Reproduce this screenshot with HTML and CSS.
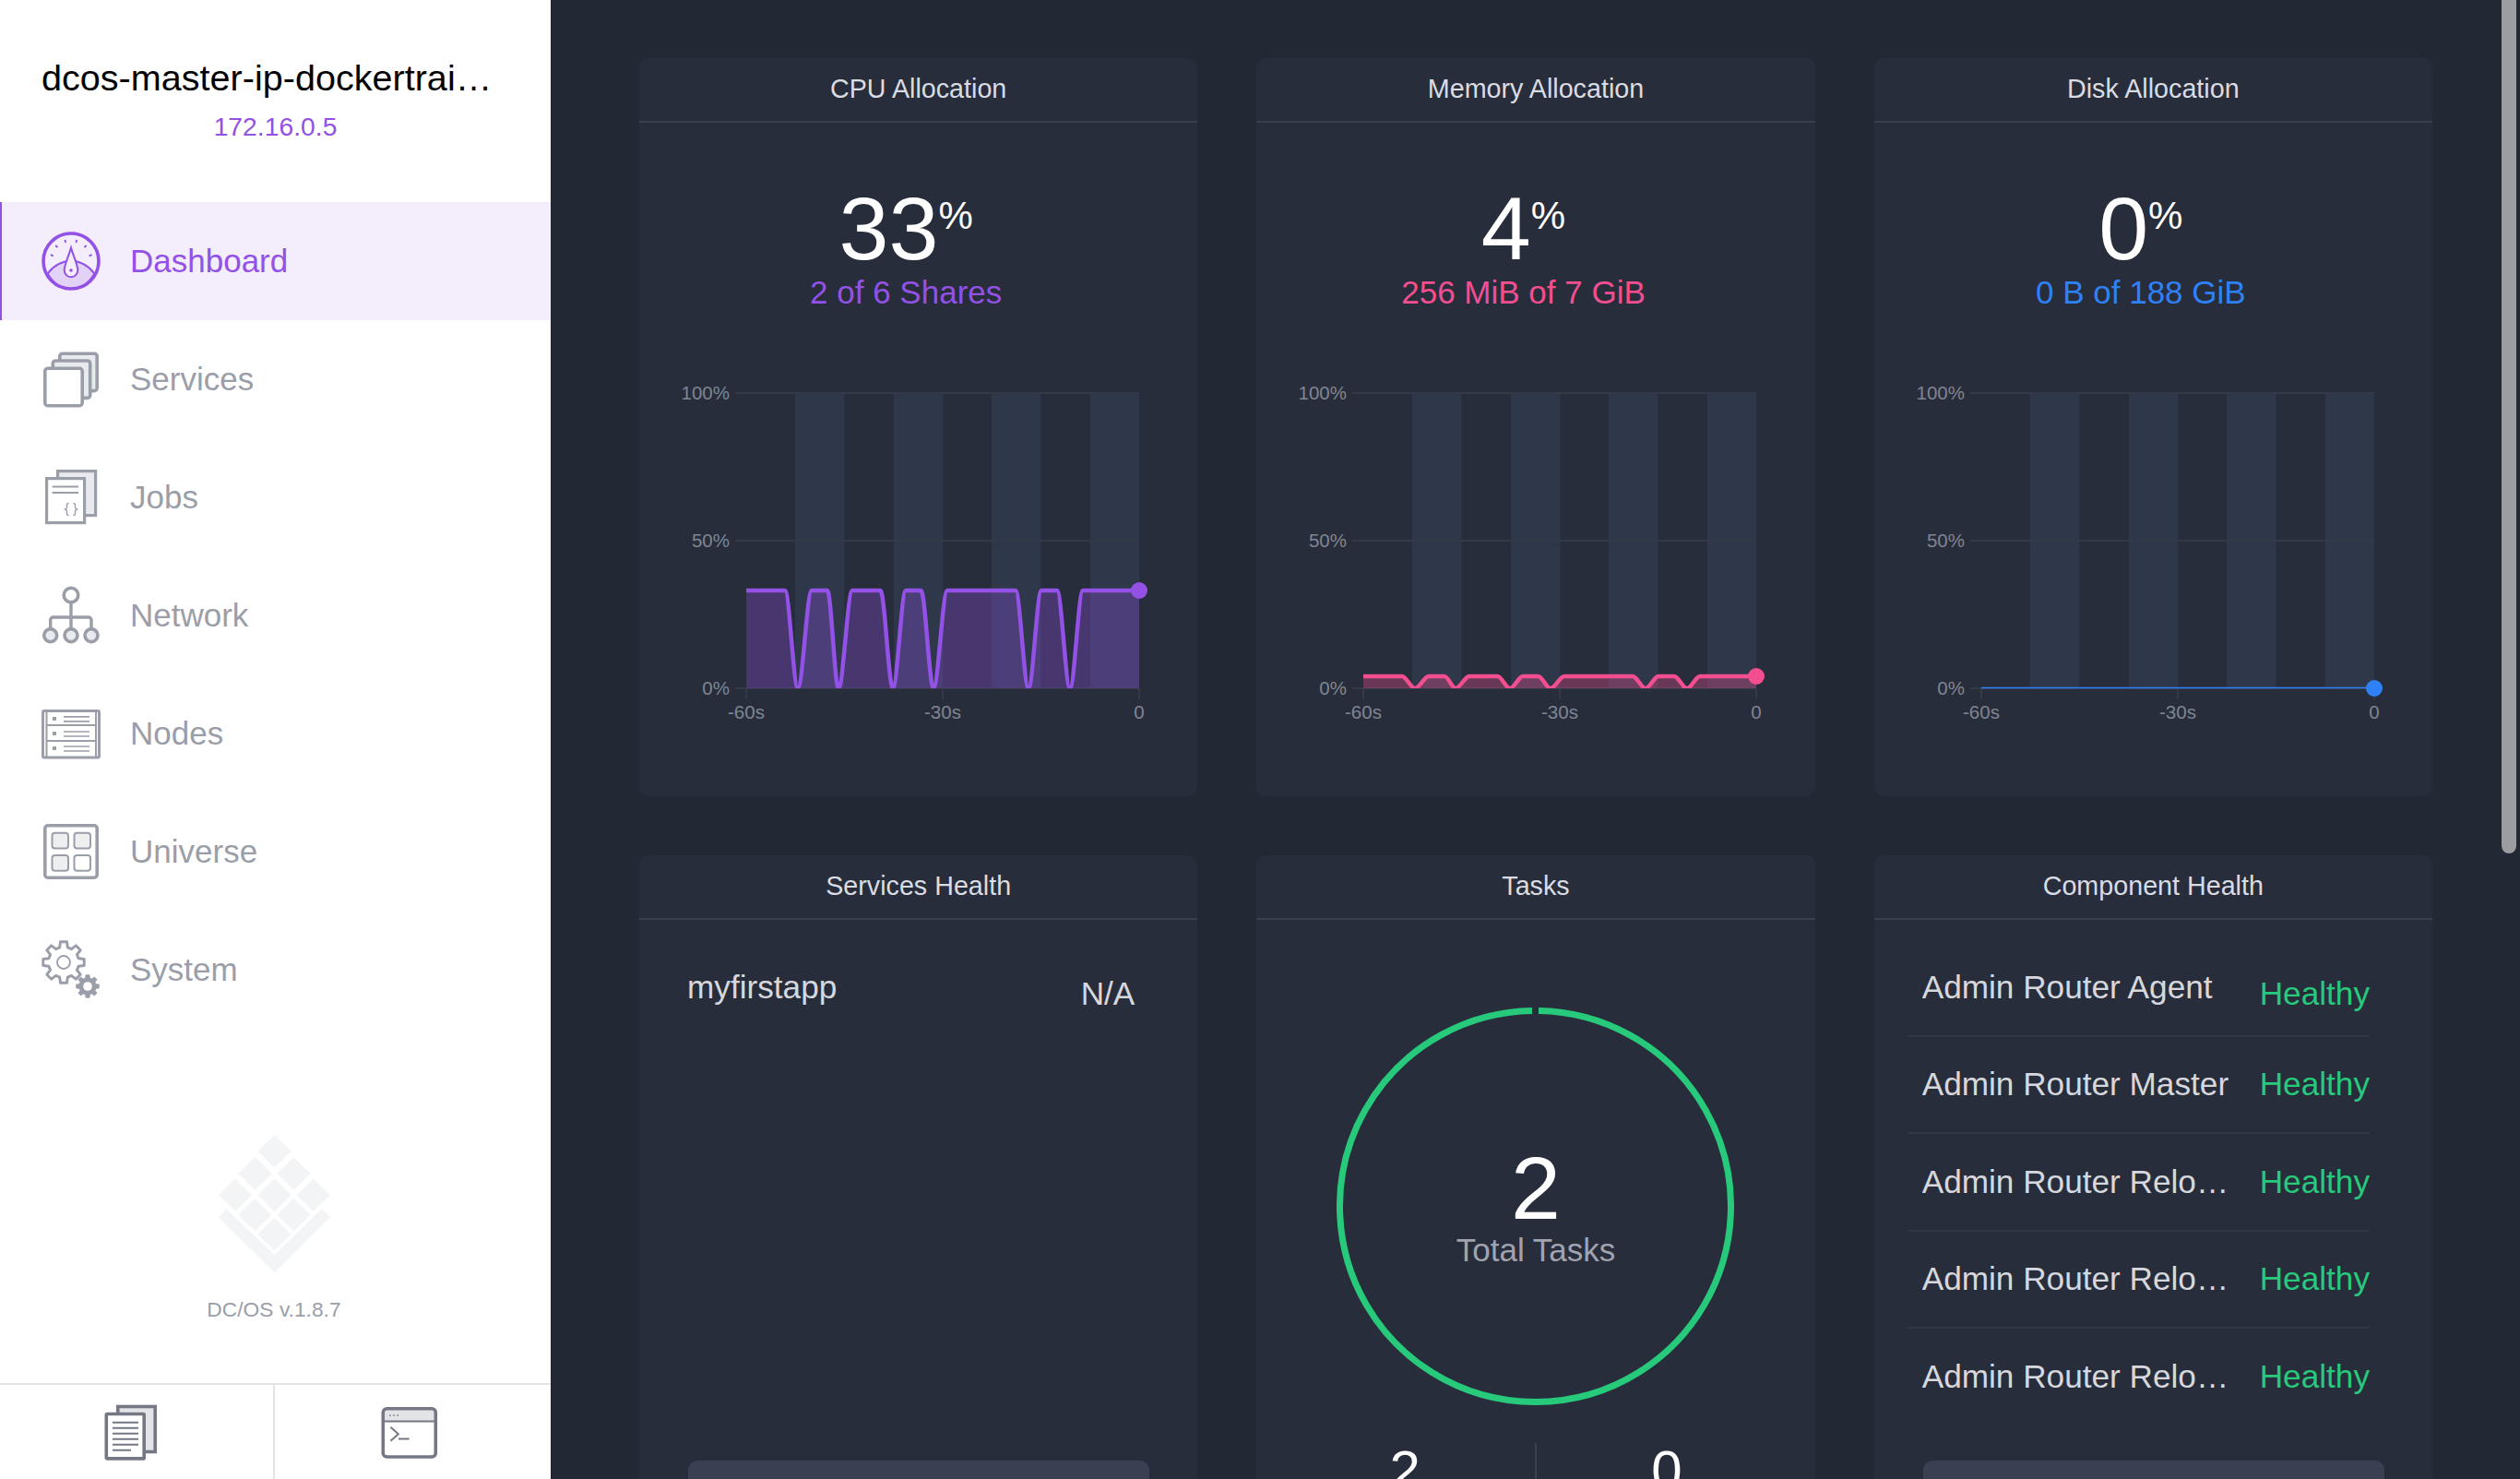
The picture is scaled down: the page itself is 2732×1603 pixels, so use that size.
FILE: index.html
```html
<!DOCTYPE html>
<html lang="en">
<head>
<meta charset="utf-8">
<title>Dashboard</title>
<link rel="stylesheet" href="styles.css">
</head>
<body>
<div class="app">
  <aside class="sidebar">
    <header class="cluster">
      <div class="cluster-name">dcos-master-ip-dockertraining</div>
      <div class="cluster-ip">172.16.0.5</div>
    </header>
    <nav class="nav">
      <a class="nav-item is-active">
        <svg class="icon" viewBox="0 0 64 64">
          <path class="purple-soft" d="M6.700 45.400C13 37 22 32 32 32s19 5 25.300 13.400C52 55 43 62 32 62S12 55 6.700 45.400Z"/>
          <circle class="purple-line" cx="32" cy="32" r="30" stroke-width="3.600"/>
          <path class="purple-white" d="M32 17.600C29 28 24.700 36 24.700 42a7.300 7.300 0 0 0 14.600 0C39.300 36 35 28 32 17.600Z" stroke-width="2"/>
          <circle class="purple-dot" cx="32" cy="42" r="1.800"/>
          <path class="purple-line" stroke-width="1.800" d="M9.800 25.200l3 1.200M15.200 15l2.200 2.200M25.400 9l.8 3M38.200 9l-.8 3M48.600 15l-2.200 2.200M54.600 25.200l-3 1.200"/>
        </svg>
        <span>Dashboard</span>
      </a>
      <a class="nav-item">
        <svg class="icon" viewBox="0 0 64 64">
          <rect class="g-soft" x="19.800" y="4.200" width="40.400" height="40.400" rx="3" stroke-width="3.600"/>
          <rect class="g-soft" x="12.300" y="12" width="40.400" height="40.400" rx="3" stroke-width="3.600"/>
          <rect class="g-white" x="3.800" y="20.300" width="40.400" height="40.400" rx="3" stroke-width="3.600"/>
        </svg>
        <span>Services</span>
      </a>
      <a class="nav-item">
        <svg class="icon" viewBox="0 0 64 64">
          <rect class="g-soft" x="17.600" y="3.600" width="41" height="48" stroke-width="3.200"/>
          <rect class="g-white" x="5.600" y="11.600" width="41" height="48" stroke-width="3.200"/>
          <path class="g-line" stroke-width="1.800" d="M11.600 20.500H40M11.600 27H40"/>
          <path class="g-line" stroke-width="1.400" d="M29.500 38.500c-2 0-2 1-2 2v2.300c0 1.200-.8 1.800-1.800 2.200 1 .4 1.800 1 1.800 2.200v2.300c0 1 0 2 2 2M34.500 38.500c2 0 2 1 2 2v2.300c0 1.200.8 1.800 1.800 2.200-1 .4-1.800 1-1.800 2.200v2.300c0 1 0 2-2 2"/>
        </svg>
        <span>Jobs</span>
      </a>
      <a class="nav-item">
        <svg class="icon" viewBox="0 0 64 64">
          <path class="g-line" stroke-width="3.400" d="M32 18V46M9.700 46V37a3 3 0 0 1 3-3H51a3 3 0 0 1 3 3V46"/>
          <circle class="g-white" cx="32" cy="10" r="7.800" stroke-width="3.600"/>
          <circle class="g-soft" cx="9.700" cy="53.600" r="7" stroke-width="3.600"/>
          <circle class="g-soft" cx="32" cy="53.600" r="7" stroke-width="3.600"/>
          <circle class="g-soft" cx="54" cy="53.600" r="7" stroke-width="3.600"/>
        </svg>
        <span>Network</span>
      </a>
      <a class="nav-item">
        <svg class="icon" viewBox="0 0 64 64">
          <rect class="g-white" x="1.500" y="7.500" width="61" height="50.500" rx="1.500" stroke-width="3"/>
          <path class="g-line" stroke-width="2" d="M5.500 8V58M59 8V58M5.500 23H59M5.500 40H59"/>
          <path class="g-line" stroke-width="1.700" d="M24 13.800H52M24 18.800H52M24 30H52M24 35H52M24 46H52M24 51H52"/>
          <path class="g-fill" d="M12 14h4v4h-4zM12 30h4v4h-4zM12 46h4v4h-4z"/>
        </svg>
        <span>Nodes</span>
      </a>
      <a class="nav-item">
        <svg class="icon" viewBox="0 0 64 64">
          <rect class="g-white" x="3.800" y="3.800" width="56.400" height="56.400" rx="3" stroke-width="3.600"/>
          <rect class="g-pale" x="11.500" y="11.800" width="17.500" height="16.800" rx="3" stroke-width="2"/>
          <rect class="g-pale" x="35.500" y="11.800" width="17.500" height="16.800" rx="3" stroke-width="2"/>
          <rect class="g-pale" x="11.500" y="36" width="17.500" height="16.800" rx="3" stroke-width="2"/>
          <rect class="g-white" x="35.500" y="36" width="17.500" height="16.800" rx="3" stroke-width="2"/>
        </svg>
        <span>Universe</span>
      </a>
      <a class="nav-item">
        <svg class="icon" viewBox="0 0 64 64">
          <defs>
            <path id="gear" d="M71.500-19.200L98.800-15.600V15.600L71.500 19.200L64.100 37L80.900 58.800L58.800 80.900L37 64.100L19.200 71.500L15.600 98.800H-15.600L-19.200 71.500L-37 64.100L-58.800 80.900L-80.900 58.800L-64.100 37L-71.500 19.200L-98.800 15.600V-15.600L-71.500-19.200L-64.100-37L-80.900-58.800L-58.800-80.900L-37-64.100L-19.200-71.500L-15.600-98.800H15.600L19.200-71.500L37-64.100L58.800-80.900L80.900-58.800L64.100-37Z"/>
          </defs>
          <use href="#gear" class="g-gear" transform="translate(24 24) scale(.225)"/>
          <circle class="g-white" cx="24" cy="24" r="7" stroke-width="1.800"/>
          <use href="#gear" class="g-gear-solid" transform="translate(50 50) scale(.125)"/>
          <circle class="g-hole" cx="50" cy="50" r="4.800"/>
        </svg>
        <span>System</span>
      </a>
    </nav>
    <div class="brand">
      <svg class="brand-logo" viewBox="0 0 121 150">
        <defs><path id="dia" d="M0-17.700L18 0L0 17.700L-18 0Z"/></defs>
        <use href="#dia" x="60.500" y="17.700"/>
        <use href="#dia" x="39.400" y="42"/>
        <use href="#dia" x="81.500" y="42"/>
        <use href="#dia" x="18" y="65.300"/>
        <use href="#dia" x="60.500" y="65.300"/>
        <use href="#dia" x="102.600" y="65.300"/>
        <use href="#dia" x="39.400" y="86.700"/>
        <use href="#dia" x="81.500" y="86.700"/>
        <use href="#dia" x="60.500" y="107.700"/>
        <path d="M8.400 80.300L0 89.300L60.500 149.300L121 89.300L111.800 80.300L60.500 130Z"/>
      </svg>
      <div class="brand-version">DC/OS v.1.8.7</div>
    </div>
    <footer class="side-footer">
      <a class="side-footer-cell">
        <svg class="icon" viewBox="0 0 64 64">
          <rect class="d-soft" x="16.800" y="4.500" width="40.400" height="49" stroke-width="3.600"/>
          <rect class="d-white" x="4.300" y="12.500" width="40.900" height="48.400" rx="1" stroke-width="3.600"/>
          <path class="d-line" stroke-width="2" d="M11 21.700H39M11 27.700H39M11 33.700H39M11 39.700H39M11 45.700H39M11 51.700H31"/>
        </svg>
      </a>
      <a class="side-footer-cell">
        <svg class="icon" viewBox="0 0 64 64">
          <path class="d-fillsoft" d="M5 20V9a3 3 0 0 1 3-3h50a3 3 0 0 1 3 3V20Z"/>
          <rect class="d-none" x="4.300" y="6.800" width="57" height="52.200" rx="4" stroke-width="3.600"/>
          <path class="d-line" stroke-width="2" d="M5 20.500H61"/>
          <path class="d-dots" d="M11 13.200h1.600v1.600H11zM15.200 13.200h1.600v1.600h-1.600zM19.400 13.200H21v1.600h-1.600z"/>
          <path class="d-line" stroke-width="2" d="M12.500 26.700L20.800 34.200L12.500 41.700M21 39.500H32.700"/>
        </svg>
      </a>
    </footer>
  </aside>

  <main class="main">
    <div class="grid">
      <section class="card">
        <h2 class="card-title">CPU Allocation</h2>
        <div class="stat">
          <div class="big">33<span class="pct">%</span></div>
          <div class="sub sub-purple">2 of 6 Shares</div>
        </div>
        <svg class="chart" viewBox="0 0 605 463">
          <defs><clipPath id="plot"><rect x="100" y="0" width="460" height="346"/></clipPath></defs>
          <rect class="bar" x="169" y="26" width="53.300" height="320"/>
          <rect class="bar" x="276" y="26" width="53.300" height="320"/>
          <rect class="bar" x="382" y="26" width="53.300" height="320"/>
          <rect class="bar" x="489" y="26" width="53" height="320"/>
          <path class="gridline" d="M104 26H542M104 186H542M104 346H542M116 346V358M329 346V358M542 346V358"/>
          <path class="area-purple" d="M116 240H158C162.700 240 167.300 346 172 346C177 346 182 240 187 240H204C208 240 212 346 216 346C221 346 226 240 231 240H261.500C266 240 270.500 346 275 346C279.700 346 284.300 240 289 240H305.500C310 240 314.500 346 319 346C324 346 329 240 334 240H408C412.700 240 417.300 346 422 346C426.700 346 431.300 240 436 240H453C457.700 240 462.300 346 467 346C471.700 346 476.300 240 481 240H542V346H116Z"/>
          <path class="line-purple" clip-path="url(#plot)" d="M116 240H158C162.700 240 167.300 346 172 346C177 346 182 240 187 240H204C208 240 212 346 216 346C221 346 226 240 231 240H261.500C266 240 270.500 346 275 346C279.700 346 284.300 240 289 240H305.500C310 240 314.500 346 319 346C324 346 329 240 334 240H408C412.700 240 417.300 346 422 346C426.700 346 431.300 240 436 240H453C457.700 240 462.300 346 467 346C471.700 346 476.300 240 481 240H542"/>
          <circle class="dot-purple" cx="542" cy="240" r="9"/>
          <text class="tick tick-y" x="98" y="33">100%</text>
          <text class="tick tick-y" x="98" y="193">50%</text>
          <text class="tick tick-y" x="98" y="353">0%</text>
          <text class="tick tick-x" x="116" y="379">-60s</text>
          <text class="tick tick-x" x="329" y="379">-30s</text>
          <text class="tick tick-x" x="542" y="379">0</text>
        </svg>
      </section>

      <section class="card">
        <h2 class="card-title">Memory Allocation</h2>
        <div class="stat">
          <div class="big">4<span class="pct">%</span></div>
          <div class="sub sub-pink">256 MiB of 7 GiB</div>
        </div>
        <svg class="chart" viewBox="0 0 605 463">
          <defs><clipPath id="plot2"><rect x="100" y="0" width="460" height="346"/></clipPath></defs>
          <rect class="bar" x="169" y="26" width="53.300" height="320"/>
          <rect class="bar" x="276" y="26" width="53.300" height="320"/>
          <rect class="bar" x="382" y="26" width="53.300" height="320"/>
          <rect class="bar" x="489" y="26" width="53" height="320"/>
          <path class="gridline" d="M104 26H542M104 186H542M104 346H542M116 346V358M329 346V358M542 346V358"/>
          <path class="area-pink" d="M116 333H158C162.700 333 167.300 346 172 346C177 346 182 333 187 333H204C208 333 212 346 216 346C221 346 226 333 231 333H261.500C266 333 270.500 346 275 346C279.700 346 284.300 333 289 333H305.500C310 333 314.500 346 319 346C324 346 329 333 334 333H408C412.700 333 417.300 346 422 346C426.700 346 431.300 333 436 333H453C457.700 333 462.300 346 467 346C471.700 346 476.300 333 481 333H542V346H116Z"/>
          <path class="line-pink" clip-path="url(#plot2)" d="M116 333H158C162.700 333 167.300 346 172 346C177 346 182 333 187 333H204C208 333 212 346 216 346C221 346 226 333 231 333H261.500C266 333 270.500 346 275 346C279.700 346 284.300 333 289 333H305.500C310 333 314.500 346 319 346C324 346 329 333 334 333H408C412.700 333 417.300 346 422 346C426.700 346 431.300 333 436 333H453C457.700 333 462.300 346 467 346C471.700 346 476.300 333 481 333H542"/>
          <circle class="dot-pink" cx="542" cy="333" r="9"/>
          <text class="tick tick-y" x="98" y="33">100%</text>
          <text class="tick tick-y" x="98" y="193">50%</text>
          <text class="tick tick-y" x="98" y="353">0%</text>
          <text class="tick tick-x" x="116" y="379">-60s</text>
          <text class="tick tick-x" x="329" y="379">-30s</text>
          <text class="tick tick-x" x="542" y="379">0</text>
        </svg>
      </section>

      <section class="card">
        <h2 class="card-title">Disk Allocation</h2>
        <div class="stat">
          <div class="big">0<span class="pct">%</span></div>
          <div class="sub sub-blue">0 B of 188 GiB</div>
        </div>
        <svg class="chart" viewBox="0 0 605 463">
          <rect class="bar" x="169" y="26" width="53.300" height="320"/>
          <rect class="bar" x="276" y="26" width="53.300" height="320"/>
          <rect class="bar" x="382" y="26" width="53.300" height="320"/>
          <rect class="bar" x="489" y="26" width="53" height="320"/>
          <path class="gridline" d="M104 26H542M104 186H542M104 346H542M116 346V358M329 346V358M542 346V358"/>
          <path class="line-blue" d="M116 345.500H542"/>
          <circle class="dot-blue" cx="542" cy="346" r="9"/>
          <text class="tick tick-y" x="98" y="33">100%</text>
          <text class="tick tick-y" x="98" y="193">50%</text>
          <text class="tick tick-y" x="98" y="353">0%</text>
          <text class="tick tick-x" x="116" y="379">-60s</text>
          <text class="tick tick-x" x="329" y="379">-30s</text>
          <text class="tick tick-x" x="542" y="379">0</text>
        </svg>
      </section>

      <section class="card">
        <h2 class="card-title">Services Health</h2>
        <ul class="health-list">
          <li class="health-row">
            <span class="health-name">myfirstapp</span>
            <span class="health-status">N/A</span>
          </li>
        </ul>
        <button class="card-button" type="button" aria-label="View all services"></button>
      </section>

      <section class="card">
        <h2 class="card-title">Tasks</h2>
        <div class="ring">
          <svg class="ring-svg" viewBox="0 0 431 431">
            <path class="ring-path" d="M219 3.530A212 212 0 1 1 212 3.530"/>
          </svg>
          <div class="ring-label">
            <div class="big">2</div>
            <div class="sub sub-muted">Total Tasks</div>
          </div>
        </div>
        <div class="task-stats">
          <div class="task-stat">2</div>
          <div class="task-stat task-stat-split">0</div>
        </div>
      </section>

      <section class="card">
        <h2 class="card-title">Component Health</h2>
        <ul class="health-list">
          <li class="health-row">
            <span class="health-name">Admin Router Agent</span>
            <span class="health-status is-ok">Healthy</span>
          </li>
          <li class="health-row">
            <span class="health-name">Admin Router Master</span>
            <span class="health-status is-ok">Healthy</span>
          </li>
          <li class="health-row">
            <span class="health-name">Admin Router Reloader</span>
            <span class="health-status is-ok">Healthy</span>
          </li>
          <li class="health-row">
            <span class="health-name">Admin Router Reloader Timer</span>
            <span class="health-status is-ok">Healthy</span>
          </li>
          <li class="health-row">
            <span class="health-name">Admin Router Reloader Service</span>
            <span class="health-status is-ok">Healthy</span>
          </li>
        </ul>
        <button class="card-button" type="button" aria-label="View all components"></button>
      </section>
    </div>
    <div class="scroll-thumb"></div>
  </main>
</div>
</body>
</html>
```

FILE: styles.css
```css
* { box-sizing: border-box; }
html, body { margin: 0; height: 100%; }
body {
  font-family: "Liberation Sans", Arial, sans-serif;
  overflow: hidden;
  background: #232835;
}
.app { display: flex; height: 100vh; }

/* Sidebar */
.sidebar {
  width: 597px;
  flex: none;
  background: #fff;
  display: flex;
  flex-direction: column;
}
.cluster { height: 219px; padding-top: 60px; }
.cluster-name {
  width: 500px;
  margin-left: 45px;
  font-size: 39.6px;
  line-height: 48px;
  color: #000;
  white-space: nowrap;
  overflow: hidden;
  text-overflow: ellipsis;
}
.cluster-ip {
  margin-top: 12px;
  font-size: 28.3px;
  line-height: 34px;
  text-align: center;
  color: #9351e5;
}
.nav { display: flex; flex-direction: column; }
.nav-item {
  height: 128px;
  padding-left: 43px;
  border-left: 2px solid transparent;
  display: flex;
  align-items: center;
  gap: 32px;
  font-size: 35px;
  color: #9a9ea9;
}
.nav-item.is-active {
  background: #f4edfc;
  border-left-color: #9351e5;
  color: #9351e5;
}
.icon { width: 64px; height: 64px; flex: none; display: block; }

.purple-soft { fill: #e2d2f8; stroke: #9351e5; stroke-width: 2; }
.purple-line { fill: none; stroke: #9351e5; }
.purple-white { fill: #f4edfc; stroke: #9351e5; }
.purple-dot { fill: #9351e5; }

.g-soft { fill: #e9eaed; stroke: #9a9ea9; }
.g-white { fill: #fff; stroke: #9a9ea9; }
.g-pale { fill: #eeeff1; stroke: #9a9ea9; }
.g-line { fill: none; stroke: #9a9ea9; }
.g-fill { fill: #9a9ea9; }
.g-gear { fill: #fff; stroke: #9a9ea9; stroke-width: 13; stroke-linejoin: round; }
.g-gear-solid { fill: #9a9ea9; stroke: #9a9ea9; stroke-width: 6; stroke-linejoin: round; }
.g-hole { fill: #fff; }

.brand {
  margin-top: auto;
  padding-bottom: 66px;
  display: flex;
  flex-direction: column;
  align-items: center;
}
.brand-logo { width: 121px; height: 150px; margin-right: 3px; fill: #f3f4f6; display: block; }
.brand-version {
  margin-top: 25px;
  margin-right: 3px;
  font-size: 22.8px;
  line-height: 28px;
  color: #9a9ea9;
}
.side-footer {
  height: 104px;
  flex: none;
  border-top: 2px solid #e3e4e6;
  display: flex;
}
.side-footer-cell {
  flex: 1;
  padding-right: 10px;
  display: flex;
  align-items: center;
  justify-content: center;
}
.side-footer-cell:first-child { flex: 0 0 298px; border-right: 2px solid #e3e4e6; }
.d-soft { fill: #e3e4e7; stroke: #747884; }
.d-white { fill: #fff; stroke: #747884; }
.d-none { fill: none; stroke: #747884; }
.d-line { fill: none; stroke: #747884; }
.d-fillsoft { fill: #e3e4e7; }
.d-dots { fill: #747884; }

/* Main */
.main {
  position: relative;
  flex: 1;
  min-width: 0;
  height: 100vh;
  overflow: hidden;
  background: #232835;
}
.scroll-thumb {
  position: absolute;
  top: 0;
  right: 4px;
  width: 16px;
  height: 925px;
  border-radius: 0 0 8px 8px;
  background: #9b9da2;
}
.grid {
  padding: 63px 95px 0 96px;
  display: grid;
  grid-template-columns: repeat(3, 1fr);
  grid-auto-rows: 800px;
  gap: 64px;
}
.card {
  background: #282d3c;
  border-radius: 10px;
  display: flex;
  flex-direction: column;
  min-width: 0;
}
.card-title {
  margin: 0;
  height: 70px;
  border-bottom: 2px solid #3a3f50;
  font-size: 28.7px;
  font-weight: 400;
  line-height: 66px;
  text-align: center;
  color: #d9dce2;
}

.stat { padding: 67px 27px 0 0; text-align: center; }
.big { font-size: 97px; line-height: 96px; color: #fff; }
.pct { font-size: 42px; line-height: 1; vertical-align: 33px; }
.sub { font-size: 35px; line-height: 38px; }
.stat .sub { margin-top: 2px; }
.sub-purple { color: #9351e5; }
.sub-pink { color: #f34e8f; }
.sub-blue { color: #2e81f7; }
.sub-muted { color: #a0a4ae; }

.chart { display: block; width: 605px; height: 463px; margin-top: 64px; flex: none; }
.bar { fill: #2f384b; }
.gridline { fill: none; stroke: #343947; stroke-width: 2; }
.tick { font-size: 20.5px; fill: #7f8592; }
.tick-y { text-anchor: end; }
.tick-x { text-anchor: middle; }
.area-purple { fill: #9351e5; fill-opacity: .3; }
.line-purple { fill: none; stroke: #9351e5; stroke-width: 4.5; }
.dot-purple { fill: #9351e5; }
.area-pink { fill: #f34e8f; fill-opacity: .33; }
.line-pink { fill: none; stroke: #f34e8f; stroke-width: 4.5; }
.dot-pink { fill: #f34e8f; }
.line-blue { fill: none; stroke: #2e81f7; stroke-width: 1.5; }
.dot-blue { fill: #2e81f7; }

.health-list {
  list-style: none;
  margin: 0;
  padding: 21px 68px 0 36px;
  flex: 1;
}
.health-row {
  height: 105.5px;
  padding-left: 16px;
  border-bottom: 2px solid #323747;
  display: flex;
  align-items: center;
  justify-content: space-between;
  font-size: 35.2px;
  color: #d6d8de;
}
.health-row:last-child { border-bottom-color: transparent; }
.health-row:first-child .health-status { margin-top: 15px; }
.health-name {
  max-width: 340px;
  white-space: nowrap;
  overflow: hidden;
  text-overflow: ellipsis;
}
.health-status { flex: none; }
.is-ok { color: #27c97b; }
.card-button {
  flex: none;
  display: block;
  height: 80px;
  margin: 0 52px 64px 53px;
  border: 0;
  padding: 0;
  border-radius: 10px;
  background: #3a4052;
}

.ring { position: relative; width: 431px; height: 431px; margin: 95px auto 0; flex: none; }
.ring-svg { display: block; width: 431px; height: 431px; }
.ring-path { fill: none; stroke: #27c97b; stroke-width: 7; }
.ring-label { position: absolute; left: 0; right: 0; top: 148px; text-align: center; }
.task-stats { display: flex; margin: 41px 20px 0; height: 100px; }
.task-stat {
  flex: 1;
  font-size: 60px;
  line-height: 60px;
  text-align: center;
  color: #fff;
}
.task-stat-split { border-left: 2px solid #3a4052; }
```
